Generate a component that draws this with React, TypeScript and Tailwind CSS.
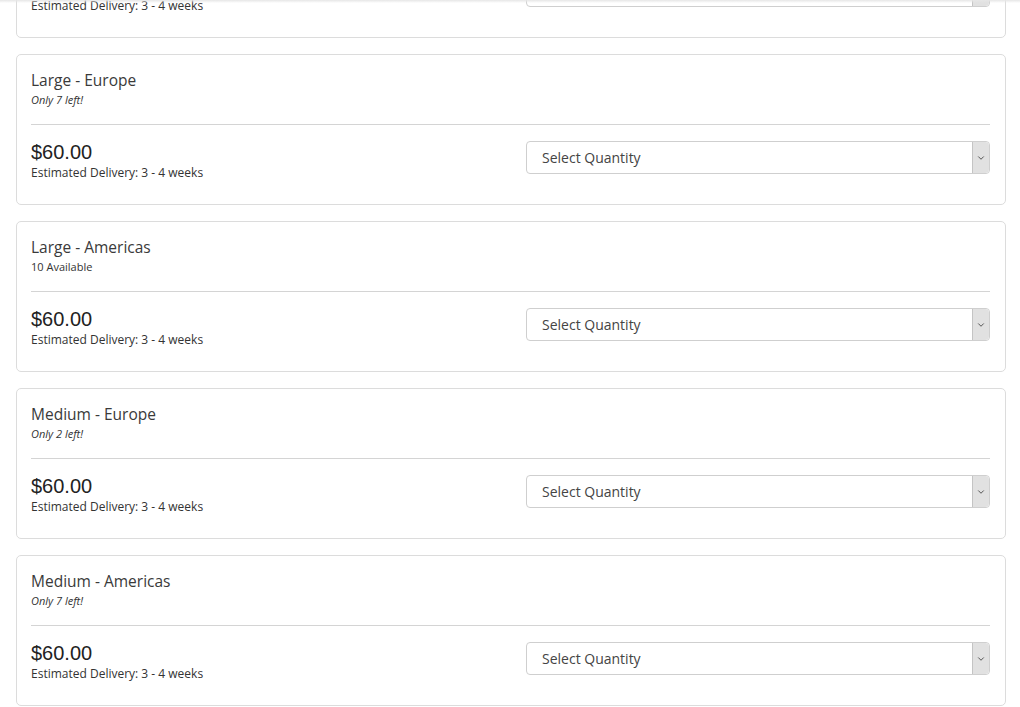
import { ChevronDown } from 'lucide-react';

type Variant = {
    name: string;
    stock: string;
    italic: boolean;
};

const variants: Variant[] = [
    { name: 'Small - Americas', stock: '10 Available', italic: false },
    { name: 'Large - Europe', stock: 'Only 7 left!', italic: true },
    { name: 'Large - Americas', stock: '10 Available', italic: false },
    { name: 'Medium - Europe', stock: 'Only 2 left!', italic: true },
    { name: 'Medium - Americas', stock: 'Only 7 left!', italic: true },
];

function VariantCard({ variant }: { variant: Variant }) {
    return (
        <div className="rounded-[5px] border border-[#dcdcdc] bg-white pl-[14px] pr-[15px] pt-[14px] pb-[21px]">
            <h3 className="text-[15.5px] leading-[22px] text-[#3a3a3a]">{variant.name}</h3>
            <p className={`mt-[1px] text-[11px] leading-[16px] text-[#333] ${variant.italic ? 'italic' : ''}`}>
                {variant.stock}
            </p>

            <div className="mt-[16px] border-t border-[#d4d4d4]" />

            <div className="flex items-start justify-between pt-[16px]">
                <div>
                    <div className="font-['Liberation_Sans',Arial,sans-serif] text-[20px] leading-[22px] text-[#222]">
                        $60.00
                    </div>
                    <div className="text-[12px] leading-[20px] text-[#333]">Estimated Delivery: 3 - 4 weeks</div>
                </div>

                <div className="flex h-[33px] w-[464px] items-center rounded-[4px] border border-[#cfcfcf] bg-white">
                    <span className="flex-1 pl-[15px] text-[14px] text-[#444]">Select Quantity</span>
                    <span className="flex h-full w-[17px] items-center justify-center rounded-r-[4px] border-l border-[#c4c4c4] bg-[#e1e1e1]">
                        <ChevronDown size={10} strokeWidth={2.4} className="text-[#555]" />
                    </span>
                </div>
            </div>
        </div>
    );
}

export default function App() {
    return (
        <div className="relative h-[707px] overflow-hidden bg-white font-['Open_Sans','Noto_Sans',sans-serif]">
            <div className="absolute inset-x-0 top-0 z-10 h-[3px] bg-gradient-to-b from-[#e6e6e6] to-transparent" />
            <div className="-mt-[113px] flex flex-col gap-[16px] pl-[16px] pr-[14px]">
                {variants.map((v) => (
                    <VariantCard key={v.name} variant={v} />
                ))}
            </div>
        </div>
    );
}
